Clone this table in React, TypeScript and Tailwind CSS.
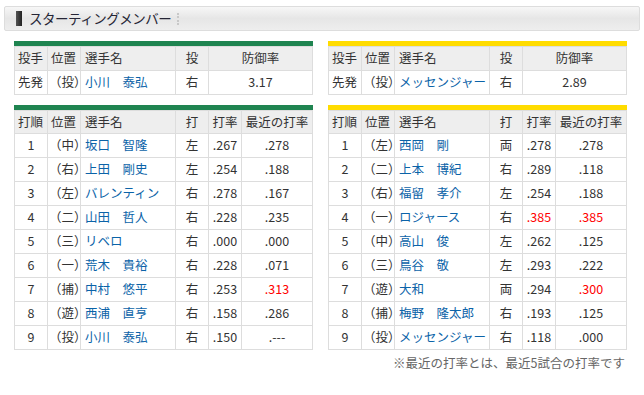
import React from "react";

type Batter = {
  order: number;
  pos: string;
  name: string;
  hand: string;
  avg: string;
  recent: string;
  hotAvg?: boolean;
  hotRecent?: boolean;
};

const leftPitcher = { pos: "（投）", name: "小川　泰弘", hand: "右", era: "3.17" };
const rightPitcher = { pos: "（投）", name: "メッセンジャー", hand: "右", era: "2.89" };

const leftBatters: Batter[] = [
  { order: 1, pos: "（中）", name: "坂口　智隆", hand: "左", avg: ".267", recent: ".278" },
  { order: 2, pos: "（右）", name: "上田　剛史", hand: "左", avg: ".254", recent: ".188" },
  { order: 3, pos: "（左）", name: "バレンティン", hand: "右", avg: ".278", recent: ".167" },
  { order: 4, pos: "（二）", name: "山田　哲人", hand: "右", avg: ".228", recent: ".235" },
  { order: 5, pos: "（三）", name: "リベロ", hand: "右", avg: ".000", recent: ".000" },
  { order: 6, pos: "（一）", name: "荒木　貴裕", hand: "右", avg: ".228", recent: ".071" },
  { order: 7, pos: "（捕）", name: "中村　悠平", hand: "右", avg: ".253", recent: ".313", hotRecent: true },
  { order: 8, pos: "（遊）", name: "西浦　直亨", hand: "右", avg: ".158", recent: ".286" },
  { order: 9, pos: "（投）", name: "小川　泰弘", hand: "右", avg: ".150", recent: ".---" },
];

const rightBatters: Batter[] = [
  { order: 1, pos: "（左）", name: "西岡　剛", hand: "両", avg: ".278", recent: ".278" },
  { order: 2, pos: "（二）", name: "上本　博紀", hand: "右", avg: ".289", recent: ".118" },
  { order: 3, pos: "（右）", name: "福留　孝介", hand: "左", avg: ".254", recent: ".188" },
  { order: 4, pos: "（一）", name: "ロジャース", hand: "右", avg: ".385", recent: ".385", hotAvg: true, hotRecent: true },
  { order: 5, pos: "（中）", name: "高山　俊", hand: "左", avg: ".262", recent: ".125" },
  { order: 6, pos: "（三）", name: "鳥谷　敬", hand: "左", avg: ".293", recent: ".222" },
  { order: 7, pos: "（遊）", name: "大和", hand: "両", avg: ".294", recent: ".300", hotRecent: true },
  { order: 8, pos: "（捕）", name: "梅野　隆太郎", hand: "右", avg: ".193", recent: ".125" },
  { order: 9, pos: "（投）", name: "メッセンジャー", hand: "右", avg: ".118", recent: ".000" },
];

const cell = "border border-[#dddddd] p-0 leading-none";

function PitcherTable({ bar, p }: { bar: string; p: typeof leftPitcher }) {
  return (
    <div>
      <div className={`h-[5px] ${bar}`} />
      <table className="w-full table-fixed border-collapse text-[12.5px] text-[#333]">
        <colgroup>
          <col className="w-[33px]" />
          <col className="w-[33px]" />
          <col className="w-[95px]" />
          <col className="w-[33px]" />
          <col />
        </colgroup>
        <thead>
          <tr className="h-[24px] bg-[#eeeeee]">
            <th className={`${cell} pl-[3px] text-left font-normal`}>投手</th>
            <th className={`${cell} pl-[3px] text-left font-normal`}>位置</th>
            <th className={`${cell} pl-[4px] text-left font-normal`}>選手名</th>
            <th className={`${cell} text-center font-normal`}>投</th>
            <th className={`${cell} text-center font-normal`}>防御率</th>
          </tr>
        </thead>
        <tbody>
          <tr className="h-[24px]">
            <td className={`${cell} pl-[3px]`}>先発</td>
            <td className={`${cell} pl-[1px]`}>{p.pos}</td>
            <td className={`${cell} pl-[4px] text-[#0b63a8]`}>{p.name}</td>
            <td className={`${cell} text-center`}>{p.hand}</td>
            <td className={`${cell} text-center`}>{p.era}</td>
          </tr>
        </tbody>
      </table>
    </div>
  );
}

function BatterTable({ bar, rows }: { bar: string; rows: Batter[] }) {
  return (
    <div>
      <div className={`h-[5px] ${bar}`} />
      <table className="w-full table-fixed border-collapse text-[12.5px] text-[#333]">
        <colgroup>
          <col className="w-[33px]" />
          <col className="w-[33px]" />
          <col className="w-[95px]" />
          <col className="w-[33px]" />
          <col className="w-[33px]" />
          <col />
        </colgroup>
        <thead>
          <tr className="h-[23px] bg-[#eeeeee]">
            <th className={`${cell} pl-[3px] text-left font-normal`}>打順</th>
            <th className={`${cell} pl-[3px] text-left font-normal`}>位置</th>
            <th className={`${cell} pl-[4px] text-left font-normal`}>選手名</th>
            <th className={`${cell} text-center font-normal`}>打</th>
            <th className={`${cell} text-center font-normal`}>打率</th>
            <th className={`${cell} text-center font-normal`}>最近の打率</th>
          </tr>
        </thead>
        <tbody>
          {rows.map((r) => (
            <tr key={r.order} className="h-[24px]">
              <td className={`${cell} text-center`}>{r.order}</td>
              <td className={`${cell} pl-[1px]`}>{r.pos}</td>
              <td className={`${cell} pl-[4px] text-[#0b63a8]`}>{r.name}</td>
              <td className={`${cell} text-center`}>{r.hand}</td>
              <td className={`${cell} text-center ${r.hotAvg ? "text-[#ff0000]" : ""}`}>{r.avg}</td>
              <td className={`${cell} text-center ${r.hotRecent ? "text-[#ff0000]" : ""}`}>{r.recent}</td>
            </tr>
          ))}
        </tbody>
      </table>
    </div>
  );
}

export default function App() {
  return (
    <div
      className="w-[644px] h-[395px] bg-white pt-[6px] px-[4px]"
      style={{ fontFamily: '"Noto Sans CJK JP", "Noto Sans", sans-serif' }}
    >
      {/* section title */}
      <div className="h-[25px] rounded-[2px] border border-[#dddddd] bg-gradient-to-b from-[#f7f7f7] via-[#e6e6e6] to-[#eeeeee] flex items-center pl-[11px]">
        <div className="w-[6px] h-[15px] bg-gradient-to-r from-[#555] to-[#222]" />
        <span className="ml-[7px] text-[13.5px] text-[#252535] tracking-[-0.5px]">スターティングメンバー</span>
        <div className="ml-[6px] h-[12px] border-l-2 border-dotted border-[#c8c8c8]" />
      </div>

      <div className="mt-[10px] ml-[10px] grid grid-cols-[299px_299px] gap-x-[15px]">
        <PitcherTable bar="bg-[#1f8450]" p={leftPitcher} />
        <PitcherTable bar="bg-[#ffdc00]" p={rightPitcher} />
        <div className="mt-[10px]">
          <BatterTable bar="bg-[#1f8450]" rows={leftBatters} />
        </div>
        <div className="mt-[10px]">
          <BatterTable bar="bg-[#ffdc00]" rows={rightBatters} />
          <p className="mt-[4px] pr-[2px] text-right text-[12.5px] text-[#666]">
            ※最近の打率とは、最近5試合の打率です
          </p>
        </div>
      </div>
    </div>
  );
}
